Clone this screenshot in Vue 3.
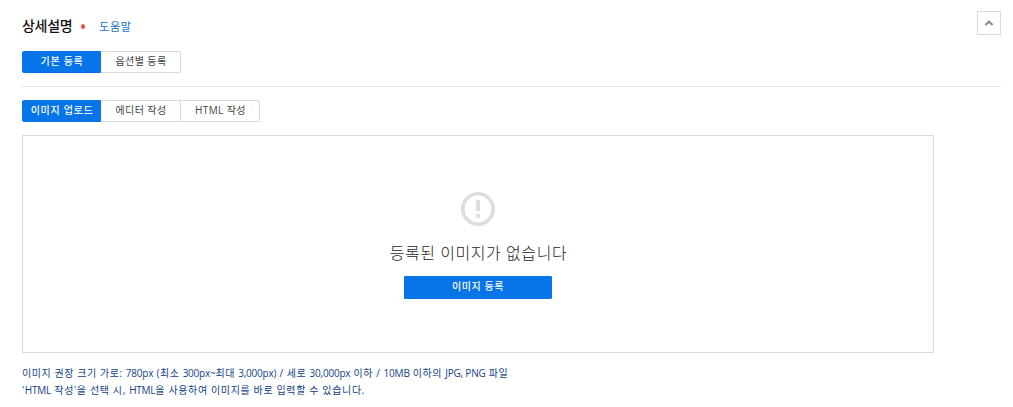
<script setup>
import { ref } from 'vue'

const registerTypes = ['기본 등록', '옵션별 등록']
const writeTypes = ['이미지 업로드', '에디터 작성', 'HTML 작성']

const registerType = ref(0)
const writeType = ref(0)
const opened = ref(true)
</script>

<template>
  <section class="detail">
    <header class="detail__header">
      <h2 class="detail__title">상세설명</h2>
      <i class="detail__required"></i>
      <a class="detail__help" href="#">도움말</a>
      <button class="detail__toggle" aria-label="toggle" @click="opened = !opened">
        <svg width="10" height="6" viewBox="0 0 10 6">
          <path d="M1.4 5.1 5 1.7l3.6 3.4" fill="none" stroke="#888" stroke-width="2" />
        </svg>
      </button>
    </header>

    <div v-if="opened" class="detail__body">
      <div class="tabs">
        <button
          v-for="(name, index) in registerTypes"
          :key="name"
          :class="['tabs__btn', { active: registerType === index }]"
          @click="registerType = index"
        >
          {{ name }}
        </button>
      </div>

      <div class="detail__line"></div>

      <div class="tabs">
        <button
          v-for="(name, index) in writeTypes"
          :key="name"
          :class="['tabs__btn', { active: writeType === index }]"
          @click="writeType = index"
        >
          {{ name }}
        </button>
      </div>

      <div class="upload">
        <svg class="upload__icon" width="34" height="34" viewBox="0 0 34 34">
          <circle cx="17" cy="17" r="15.2" fill="none" stroke="#ddd" stroke-width="3.6" />
          <path d="M15 8.2h4v10.9h-4zM15 21.9h4v3.8h-4z" fill="#ddd" />
        </svg>
        <p class="upload__text">등록된 이미지가 없습니다</p>
        <button class="upload__btn">이미지 등록</button>
      </div>

      <div class="guide">
        <p class="guide__size">이미지 권장 크기 가로: <span>780px</span> (최소 <span>300px~</span>최대 <span>3,000px)</span> / 세로 <span>30,000px</span> 이하 / <span>10MB</span> 이하의 <span>JPG, PNG</span> 파일</p>
        <p>'<span>HTML</span> 작성'을 선택 시, <span>HTML</span>을 사용하여 이미지를 바로 입력할 수 있습니다.</p>
      </div>
    </div>
  </section>
</template>

<style>
body {
  background: #fff;
}
</style>

<style scoped>
.detail {
  box-sizing: border-box;
  padding: 11px 12px 0 22px;
  font-family: "Open Sans", "Noto Sans CJK KR", sans-serif;
  color: #444;
}

.detail button {
  box-sizing: border-box;
  font-family: inherit;
  cursor: pointer;
}

.detail p {
  margin: 0;
  white-space: nowrap;
}

.detail__header {
  display: flex;
  align-items: center;
  height: 30px;
}

.detail__title {
  margin: 0;
  font-size: 14px;
  line-height: 20px;
  font-weight: 500;
  letter-spacing: -0.3px;
  color: #111;
}

.detail__required {
  width: 4px;
  height: 5px;
  margin: 1px 0 0 9px;
  border-radius: 50%;
  background: #df4b40;
}

.detail__help {
  margin: 1px 0 0 14px;
  font-size: 11px;
  line-height: 20px;
  letter-spacing: 0.6px;
  color: #1672c4;
  text-decoration: none;
}

.detail__toggle {
  display: flex;
  align-items: center;
  justify-content: center;
  align-self: flex-start;
  width: 24px;
  height: 24px;
  margin-left: auto;
  padding: 0;
  border: 1px solid #d9dcdd;
  background: #fff;
}

.detail__body {
  padding-top: 10px;
}

.tabs {
  display: flex;
}

.tabs__btn {
  width: 80px;
  height: 22px;
  padding: 0 0 1px 1px;
  border: 1px solid #d9dcdd;
  border-left: 0;
  background: #fff;
  color: #444;
  font-size: 10px;
  line-height: 19px;
  letter-spacing: 0.4px;
}

.tabs__btn:last-child {
  border-radius: 0 2px 2px 0;
}

.tabs__btn:nth-child(3) {
  width: 79px;
}

.tabs__btn.active {
  width: 79px;
  border: 1px solid #0774e7;
  border-radius: 2px 0 0 2px;
  background: #0774e7;
  color: #fff;
  font-weight: 500;
  letter-spacing: 0.7px;
}

.detail__line {
  height: 1px;
  margin: 13px 0;
  background: #e1e4e6;
}

.upload {
  display: flex;
  flex-direction: column;
  align-items: center;
  box-sizing: border-box;
  width: 912px;
  height: 218px;
  margin-top: 13px;
  padding-top: 56px;
  border: 1px solid #dcdcdc;
}

.upload__icon {
  display: block;
}

.detail .upload__text {
  margin: 15px 0 0 1px;
  font-size: 16px;
  line-height: 24px;
  letter-spacing: 0.55px;
  font-weight: 300;
  color: #222;
}

.upload__btn {
  width: 148px;
  height: 23px;
  margin-top: 11px;
  padding: 0 0 2px;
  border: 1px solid #0774e7;
  border-radius: 1px;
  background: #0774e7;
  color: #fff;
  font-size: 10px;
  line-height: 19px;
  letter-spacing: 0.6px;
  font-weight: 500;
}

.guide {
  margin-top: 12px;
  font-size: 10px;
  line-height: 17px;
  letter-spacing: 0.64px;
  color: #123f87;
}

.guide__size {
  letter-spacing: 0.57px;
}

.guide span {
  letter-spacing: -0.22px;
}
</style>
